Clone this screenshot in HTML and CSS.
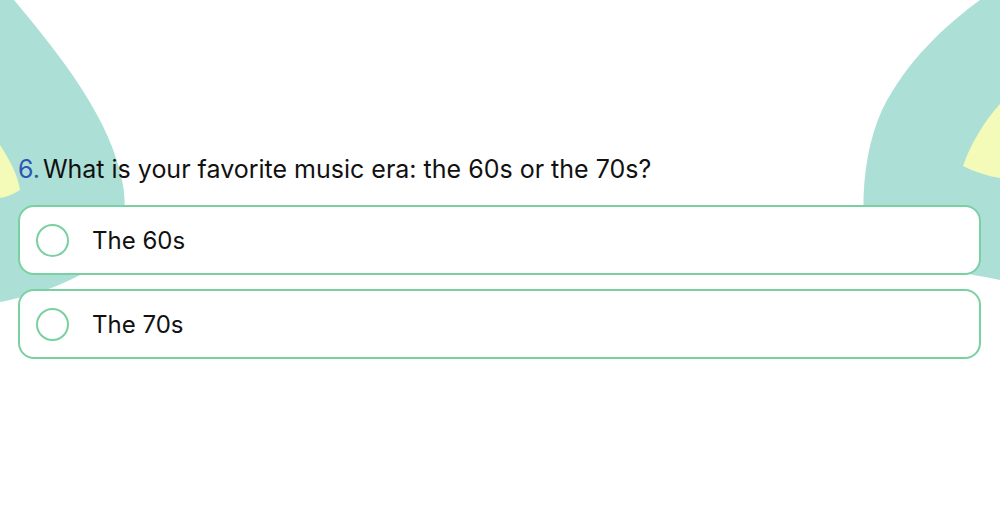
FILE: index.html
```html
<!DOCTYPE html>
<html lang="en">
<head>
<meta charset="utf-8">
<link rel="stylesheet" href="styles.css">
</head>
<body>
<div class="page">
  <svg class="deco deco-left" width="140" height="320" viewBox="0 0 140 320" aria-hidden="true">
    <path d="M0,0 L14,0 C60,55 112,120 123,185 C131,235 110,262 70,280 C45,292 20,298 0,302 Z" fill="#ace0d6"/>
    <path d="M0,145 C10,160 18,176 20,190 C14,194 6,197 0,198 Z" fill="#f4fbb9"/>
  </svg>
  <svg class="deco deco-right" width="160" height="300" viewBox="840 0 160 300" aria-hidden="true">
    <path d="M980,0 L1000,0 L1000,280 C960,272 900,262 866,252 C860,200 864,150 882,110 C907,60 946,25 980,0 Z" fill="#ace0d6"/>
    <path d="M1000,104 C985,120 970,145 963,166 C975,172 988,176 1000,178 Z" fill="#f4fbb9"/>
  </svg>

  <main class="quiz">
    <h2 class="question"><span class="num">6.</span>What is your favorite music era: the 60s or the 70s?</h2>
    <div class="options">
      <label class="option"><span class="radio"></span><span class="label">The 60s</span></label>
      <label class="option"><span class="radio"></span><span class="label">The 70s</span></label>
    </div>
  </main>
</div>
</body>
</html>
```

FILE: styles.css
```css
html, body {
  margin: 0;
  padding: 0;
  background: #ffffff;
}
body {
  font-family: Inter, "Noto Sans", sans-serif;
  color: #111111;
  width: 1000px;
  height: 520px;
  overflow: hidden;
}
.page {
  position: relative;
  width: 1000px;
  height: 520px;
}
.deco {
  position: absolute;
  top: 0;
  z-index: 0;
}
.deco-left { left: 0; }
.deco-right { right: 0; }

.quiz {
  position: relative;
  z-index: 1;
  padding: 152px 19px 0 18px;
}
.question {
  margin: 0 0 19px 0;
  font-size: 25px;
  font-weight: 400;
  line-height: 34px;
  display: flex;
  gap: 3px;
  letter-spacing: 0;
}
.num {
  color: #2f55b5;
  font-weight: 400;
}
.options {
  display: flex;
  flex-direction: column;
  gap: 14px;
}
.option {
  box-sizing: border-box;
  display: flex;
  align-items: center;
  height: 70px;
  border: 2px solid #79d0a1;
  border-radius: 16px;
  background: #ffffff;
  padding-left: 16px;
}
.radio {
  box-sizing: border-box;
  width: 33px;
  height: 33px;
  border: 2px solid #79d0a1;
  border-radius: 50%;
  flex: none;
}
.label {
  margin-left: 23px;
  font-size: 24px;
  color: #111111;
}
```
